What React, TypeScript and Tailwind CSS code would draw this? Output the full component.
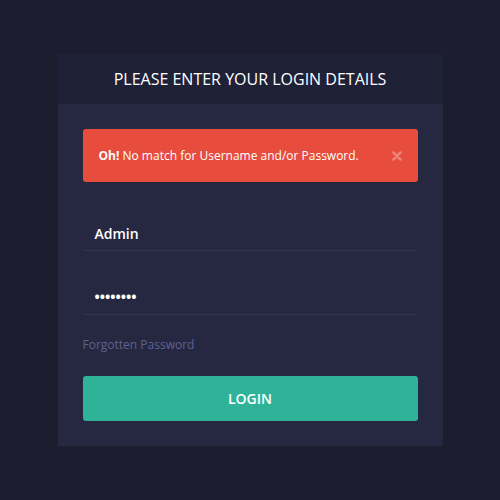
import React from 'react'

const App = () => {
    return (
        <div className="w-[500px] h-[500px] bg-[#1c1e30] pt-[54px] font-['Open_Sans',sans-serif]">
            <div className="mx-auto w-[385px] bg-[#252840]">
                <div className="h-[50px] bg-[#1f2137] flex items-center justify-center text-[16px] text-white">
                    PLEASE ENTER YOUR LOGIN DETAILS
                </div>
                <div className="px-[25px] pt-[25px] pb-[25px]">
                    <div className="h-[53px] rounded-[3px] bg-[#e74c3c] flex items-center justify-between pl-[16px] pr-[16px] text-[12px] text-white">
                        <div><span className="font-bold">Oh!</span> No match for Username and/or Password.</div>
                        <svg width="10" height="10" viewBox="0 0 10 10" className="opacity-30">
                            <path d="M1.5 1.5 L8.5 8.5 M8.5 1.5 L1.5 8.5" stroke="#ffffff" strokeWidth="2.6" strokeLinecap="round" />
                        </svg>
                    </div>
                    <div className="mt-[34px] h-[35px] border-b border-[#31344e] pl-[12px] flex items-center text-[14px] font-semibold text-white">
                        Admin
                    </div>
                    <div className="mt-[28px] h-[36px] border-b border-[#31344e] pl-[12px] flex items-center text-[14px] text-white font-bold">
                        ••••••••
                    </div>
                    <div className="mt-[22px] text-[12px] leading-[16px] text-[#5d6290]">Forgotten Password</div>
                    <button className="mt-[23px] w-full h-[45px] rounded-[3px] bg-[#2eb398] text-white text-[14px] font-semibold">
                        LOGIN
                    </button>
                </div>
            </div>
        </div>
    )
}

export default App
